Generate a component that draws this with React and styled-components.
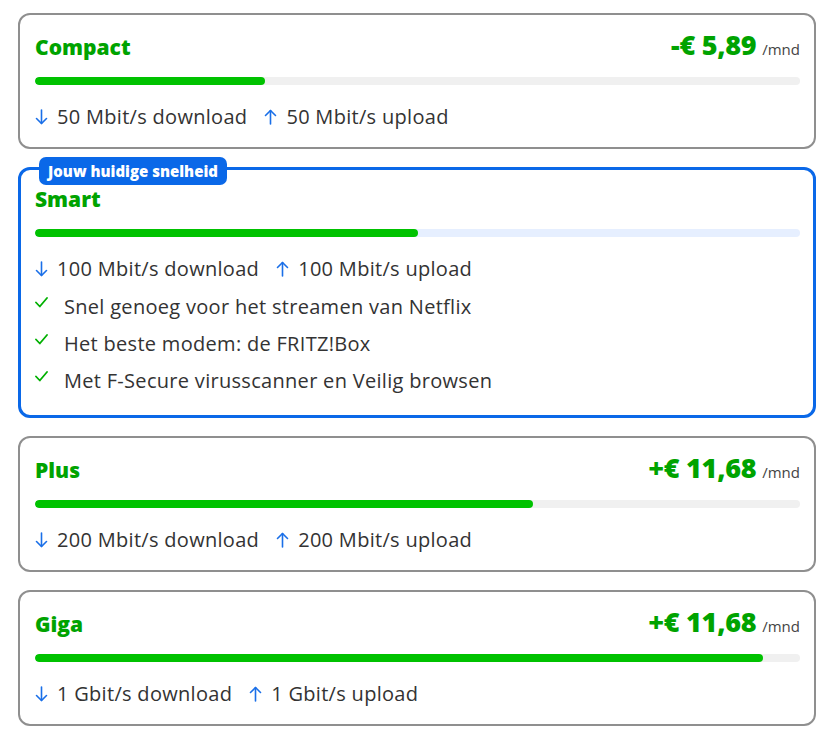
import React from "react";
import styled, { createGlobalStyle, css } from "styled-components";

const Global = createGlobalStyle`
  html, body { margin: 0; padding: 0; background: #ffffff; }
  body { font-family: "Open Sans", "Noto Sans", Arial, sans-serif; color: #333333; }
`;

const Page = styled.div`
  width: 824px;
  padding: 13px 8px 10px 18px;
  box-sizing: border-box;
  display: flex;
  flex-direction: column;
  gap: 18px;
`;

const Card = styled.div`
  position: relative;
  width: 798px;
  box-sizing: border-box;
  border: 2px solid #8f8f8f;
  border-radius: 12px;
  padding: 14px 14px 17px 15px;
  background: #fff;
  ${(p) =>
    p.$selected &&
    css`
      border: 3px solid #0a68e8;
      padding: 13px 13px 21px 14px;
    `}
`;

const Badge = styled.div`
  position: absolute;
  top: -13px;
  left: 18px;
  background: #0a68e8;
  color: #fff;
  font-weight: 800;
  font-size: 15px;
  line-height: 28px;
  padding: 0 9px;
  border-radius: 7px;
  white-space: nowrap;
`;

const Header = styled.div`
  display: flex;
  justify-content: space-between;
  align-items: baseline;
  height: 32px;
`;

const Title = styled.div`
  color: #00a300;
  font-weight: 800;
  font-size: 21px;
  line-height: 32px;
`;

const Price = styled.div`
  display: flex;
  align-items: baseline;
  gap: 6px;
`;

const Amount = styled.span`
  color: #00a300;
  font-weight: 800;
  font-size: 27px;
  line-height: 32px;
  letter-spacing: -0.3px;
`;

const Per = styled.span`
  color: #444;
  font-size: 15px;
`;

const Track = styled.div`
  margin-top: ${(p) => (p.$selected ? "14px" : "16px")};
  height: 8px;
  width: 765px;
  border-radius: 4px;
  background: ${(p) => (p.$selected ? "#e6efff" : "#f0f0f0")};
  overflow: hidden;
`;

const Fill = styled.div`
  height: 100%;
  border-radius: 4px;
  background: #00c200;
`;

const Speeds = styled.div`
  display: flex;
  align-items: center;
  gap: 17px;
  margin-top: 19px;
  font-size: 20px;
  letter-spacing: 0.3px;
  line-height: 26px;
`;

const Speed = styled.div`
  display: flex;
  align-items: center;
  gap: 9px;
`;

const Features = styled.ul`
  list-style: none;
  margin: 12px 0 0;
  padding: 0;
  display: flex;
  flex-direction: column;
  gap: 11px;
`;

const Feature = styled.li`
  display: flex;
  align-items: center;
  gap: 16px;
  font-size: 20px;
  letter-spacing: 0.3px;
  line-height: 26px;
`;

const CheckIcon = styled.svg`
  flex: none;
  margin-top: -10px;
`;

const Arrow = ({ up }) => (
  <svg width="13" height="16" viewBox="0 0 13 16" fill="none" stroke="#1a6fe8" strokeWidth="1.6" strokeLinecap="round" strokeLinejoin="round">
    {up ? (
      <>
        <path d="M6.5 15V1.5" />
        <path d="M1.5 6.5L6.5 1.5L11.5 6.5" />
      </>
    ) : (
      <>
        <path d="M6.5 1V14.5" />
        <path d="M1.5 9.5L6.5 14.5L11.5 9.5" />
      </>
    )}
  </svg>
);

const Check = () => (
  <CheckIcon width="13" height="11" viewBox="0 0 13 11" fill="none" stroke="#00b000" strokeWidth="1.8" strokeLinecap="round" strokeLinejoin="round">
    <path d="M1 5.5L4.8 9.5L12 1" />
  </CheckIcon>
);

const plans = [
  { name: "Compact", price: "-€ 5,89", pct: 30.1, down: "50 Mbit/s", up: "50 Mbit/s" },
  {
    name: "Smart",
    pct: 50.1,
    down: "100 Mbit/s",
    up: "100 Mbit/s",
    selected: true,
    features: [
      "Snel genoeg voor het streamen van Netflix",
      "Het beste modem: de FRITZ!Box",
      "Met F-Secure virusscanner en Veilig browsen",
    ],
  },
  { name: "Plus", price: "+€ 11,68", pct: 65.1, down: "200 Mbit/s", up: "200 Mbit/s" },
  { name: "Giga", price: "+€ 11,68", pct: 95.2, down: "1 Gbit/s", up: "1 Gbit/s" },
];

export default function App() {
  return (
    <>
      <Global />
      <Page>
        {plans.map((p) => (
          <Card key={p.name} $selected={p.selected}>
            {p.selected && <Badge>Jouw huidige snelheid</Badge>}
            <Header>
              <Title>{p.name}</Title>
              {p.price && (
                <Price>
                  <Amount>{p.price}</Amount>
                  <Per>/mnd</Per>
                </Price>
              )}
            </Header>
            <Track $selected={p.selected}>
              <Fill style={{ width: `${p.pct}%` }} />
            </Track>
            <Speeds>
              <Speed>
                <Arrow />
                {p.down} download
              </Speed>
              <Speed>
                <Arrow up />
                {p.up} upload
              </Speed>
            </Speeds>
            {p.features && (
              <Features>
                {p.features.map((f) => (
                  <Feature key={f}>
                    <Check />
                    {f}
                  </Feature>
                ))}
              </Features>
            )}
          </Card>
        ))}
      </Page>
    </>
  );
}
